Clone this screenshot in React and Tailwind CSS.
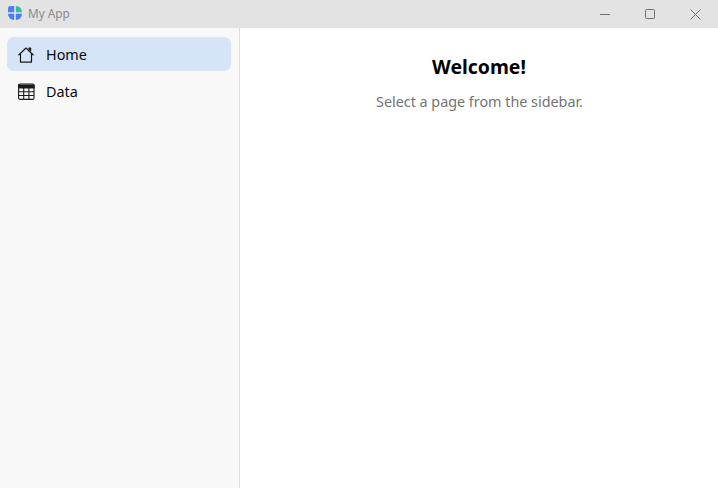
export default function App() {
  return (
    <div className="flex h-[488px] w-[718px] flex-col overflow-hidden bg-white font-['Noto_Sans',sans-serif]">
      <header className="flex h-[28px] shrink-0 items-center bg-[#e3e3e3]">
        <div className="flex items-center gap-[6px] pl-[8px]">
          <svg width="14" height="14" viewBox="0 0 14 14" className="mb-[2px]">
            <path d="M6.2 0V6.2H0V2.2A2.2 2.2 0 0 1 2.2 0Z" fill="#4f7ff2" />
            <path d="M7.8 0A6.2 6.2 0 0 1 14 6.2H7.8Z" fill="#2dc3a0" />
            <path d="M0 7.8H6.2V14A6.2 6.2 0 0 1 0 7.8Z" fill="#4a7df0" />
            <path d="M7.8 7.8H14A6.2 6.2 0 0 1 7.8 14Z" fill="#4a7df0" />
          </svg>
          <span className="text-[11.8px] leading-none text-[#8a8a8a]">My App</span>
        </div>
        <div className="ml-auto flex items-center text-[#6f6f6f]">
          <div className="flex h-[28px] w-[45px] items-center justify-center pr-[1px]">
            <svg width="10" height="10" viewBox="0 0 10 10"><path d="M0 5.5H10" stroke="currentColor" strokeWidth="1" /></svg>
          </div>
          <div className="flex h-[28px] w-[45px] items-center justify-center pr-[1px]">
            <svg width="10" height="10" viewBox="0 0 10 10"><rect x="0.5" y="0.5" width="9" height="9" rx="1" fill="none" stroke="currentColor" strokeWidth="1" /></svg>
          </div>
          <div className="flex h-[28px] w-[45px] items-center justify-center">
            <svg width="11" height="11" viewBox="0 0 11 11"><path d="M0.5 0.5L10.5 10.5M10.5 0.5L0.5 10.5" stroke="currentColor" strokeWidth="1" /></svg>
          </div>
        </div>
      </header>
      <div className="flex min-h-0 flex-1">
        <aside className="flex w-[240px] shrink-0 flex-col gap-[3px] border-r border-[#dcdcdc] bg-[#f8f8f8] pl-[7px] pr-[8px] pt-[9px]">
          <div className="flex h-[34px] items-center gap-[11px] rounded-[7px] bg-[#d5e4f7] pl-[11px] text-[14.4px] text-[#0a0a0a]">
            <svg width="17" height="17" viewBox="0 0 17 17" fill="none" stroke="#1a1a1a" strokeWidth="1.2" strokeLinejoin="round">
              <path d="M0.5 9.2L8 2L15.5 9.2" />
              <path d="M2.5 7.6V16.2H13.5V7.6" />
              <path d="M11 3.2V2H12.6V5.2" fill="#1a1a1a" />
            </svg>
            <span className="pt-[1px]">Home</span>
          </div>
          <div className="flex h-[34px] items-center gap-[11px] pl-[11px] text-[14.4px] text-[#0a0a0a]">
            <svg width="17" height="17" viewBox="0 0 17 17" fill="none" stroke="#1a1a1a" strokeWidth="1.1">
              <rect x="0.6" y="1" width="15.4" height="15.4" rx="1.5" />
              <path d="M0.6 2H16V5H0.6Z" fill="#1a1a1a" />
              <path d="M0.6 8.7H16M0.6 12.5H16M5.7 5V16.4M10.9 5V16.4" />
            </svg>
            <span className="pt-[1px]">Data</span>
          </div>
        </aside>
        <main className="flex flex-1 flex-col items-center pt-[25px]">
          <h1 className="text-[19.4px] font-bold leading-[28px] text-black">Welcome!</h1>
          <p className="mt-[11px] pl-[1px] text-[14.35px] leading-[20px] text-[#737373]">Select a page from the sidebar.</p>
        </main>
      </div>
    </div>
  );
}
